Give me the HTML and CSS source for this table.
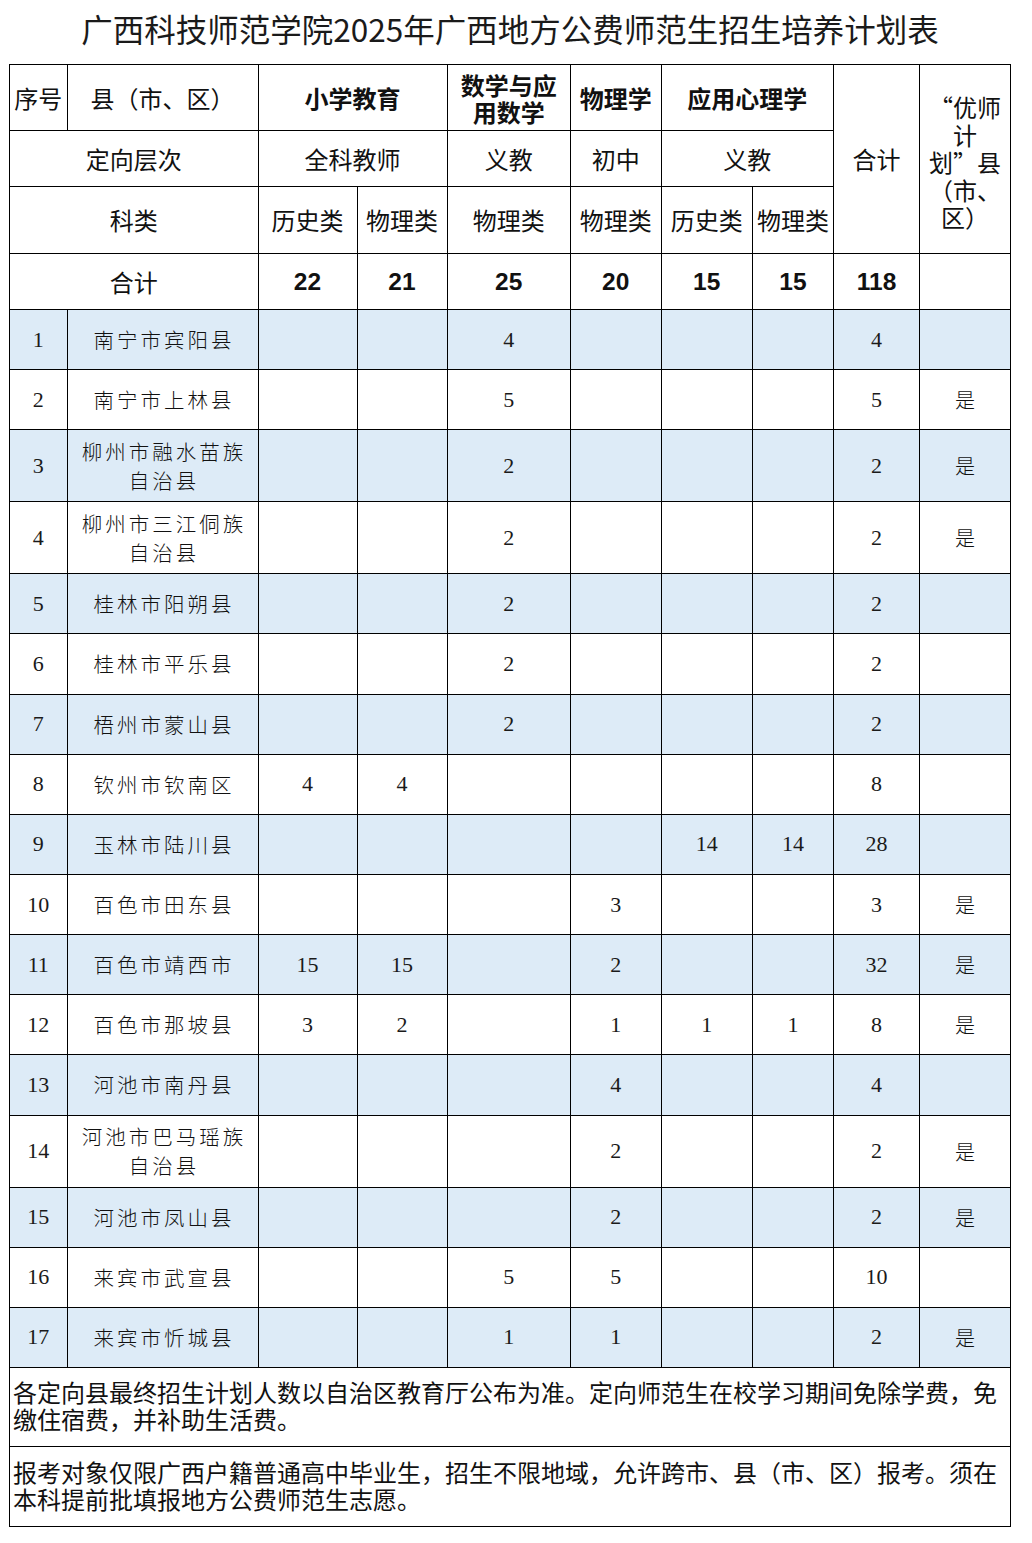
FILE: index.html
```html
<!DOCTYPE html>
<html lang="zh-CN">
<head>
<meta charset="utf-8">
<title>广西科技师范学院2025年广西地方公费师范生招生培养计划表</title>
<link rel="stylesheet" href="styles.css">
</head>
<body>
<div class="page">
  <h1 class="title">广西科技师范学院2025年广西地方公费师范生招生培养计划表</h1>
  <table class="plan">
    <colgroup>
      <col class="c1"><col class="c2"><col class="c3"><col class="c4"><col class="c5">
      <col class="c6"><col class="c7"><col class="c8"><col class="c9"><col class="c10">
    </colgroup>
    <thead>
      <tr class="h1">
        <th>序号</th>
        <th>县（市、区）</th>
        <th class="b" colspan="2">小学教育</th>
        <th class="b tight">数学与应<br>用数学</th>
        <th class="b">物理学</th>
        <th class="b" colspan="2">应用心理学</th>
        <th rowspan="3">合计</th>
        <th rowspan="3" class="youshi">“优师<br>计<br>划”县<br>（市、<br>区）</th>
      </tr>
      <tr class="h2">
        <th colspan="2">定向层次</th>
        <th colspan="2">全科教师</th>
        <th>义教</th>
        <th>初中</th>
        <th colspan="2">义教</th>
      </tr>
      <tr class="h3">
        <th colspan="2">科类</th>
        <th>历史类</th>
        <th>物理类</th>
        <th>物理类</th>
        <th>物理类</th>
        <th>历史类</th>
        <th>物理类</th>
      </tr>
      <tr class="h4">
        <th colspan="2">合计</th>
        <th class="num">22</th>
        <th class="num">21</th>
        <th class="num">25</th>
        <th class="num">20</th>
        <th class="num">15</th>
        <th class="num">15</th>
        <th class="num">118</th>
        <th></th>
      </tr>
    </thead>
    <tbody>
      <tr class="odd"><td class="n">1</td><td class="cn">南宁市宾阳县</td><td></td><td></td><td class="n">4</td><td></td><td></td><td></td><td class="n">4</td><td class="yes"></td></tr>
      <tr><td class="n">2</td><td class="cn">南宁市上林县</td><td></td><td></td><td class="n">5</td><td></td><td></td><td></td><td class="n">5</td><td class="yes">是</td></tr>
      <tr class="odd two"><td class="n">3</td><td class="cn">柳州市融水苗族<br>自治县</td><td></td><td></td><td class="n">2</td><td></td><td></td><td></td><td class="n">2</td><td class="yes">是</td></tr>
      <tr class="two"><td class="n">4</td><td class="cn">柳州市三江侗族<br>自治县</td><td></td><td></td><td class="n">2</td><td></td><td></td><td></td><td class="n">2</td><td class="yes">是</td></tr>
      <tr class="odd"><td class="n">5</td><td class="cn">桂林市阳朔县</td><td></td><td></td><td class="n">2</td><td></td><td></td><td></td><td class="n">2</td><td class="yes"></td></tr>
      <tr><td class="n">6</td><td class="cn">桂林市平乐县</td><td></td><td></td><td class="n">2</td><td></td><td></td><td></td><td class="n">2</td><td class="yes"></td></tr>
      <tr class="odd"><td class="n">7</td><td class="cn">梧州市蒙山县</td><td></td><td></td><td class="n">2</td><td></td><td></td><td></td><td class="n">2</td><td class="yes"></td></tr>
      <tr><td class="n">8</td><td class="cn">钦州市钦南区</td><td class="n">4</td><td class="n">4</td><td></td><td></td><td></td><td></td><td class="n">8</td><td class="yes"></td></tr>
      <tr class="odd"><td class="n">9</td><td class="cn">玉林市陆川县</td><td></td><td></td><td></td><td></td><td class="n">14</td><td class="n">14</td><td class="n">28</td><td class="yes"></td></tr>
      <tr><td class="n">10</td><td class="cn">百色市田东县</td><td></td><td></td><td></td><td class="n">3</td><td></td><td></td><td class="n">3</td><td class="yes">是</td></tr>
      <tr class="odd"><td class="n">11</td><td class="cn">百色市靖西市</td><td class="n">15</td><td class="n">15</td><td></td><td class="n">2</td><td></td><td></td><td class="n">32</td><td class="yes">是</td></tr>
      <tr><td class="n">12</td><td class="cn">百色市那坡县</td><td class="n">3</td><td class="n">2</td><td></td><td class="n">1</td><td class="n">1</td><td class="n">1</td><td class="n">8</td><td class="yes">是</td></tr>
      <tr class="odd"><td class="n">13</td><td class="cn">河池市南丹县</td><td></td><td></td><td></td><td class="n">4</td><td></td><td></td><td class="n">4</td><td class="yes"></td></tr>
      <tr class="two"><td class="n">14</td><td class="cn">河池市巴马瑶族<br>自治县</td><td></td><td></td><td></td><td class="n">2</td><td></td><td></td><td class="n">2</td><td class="yes">是</td></tr>
      <tr class="odd"><td class="n">15</td><td class="cn">河池市凤山县</td><td></td><td></td><td></td><td class="n">2</td><td></td><td></td><td class="n">2</td><td class="yes">是</td></tr>
      <tr><td class="n">16</td><td class="cn">来宾市武宣县</td><td></td><td></td><td class="n">5</td><td class="n">5</td><td></td><td></td><td class="n">10</td><td class="yes"></td></tr>
      <tr class="odd"><td class="n">17</td><td class="cn">来宾市忻城县</td><td></td><td></td><td class="n">1</td><td class="n">1</td><td></td><td></td><td class="n">2</td><td class="yes">是</td></tr>
    </tbody>
    <tfoot>
      <tr class="note"><td colspan="10">各定向县最终招生计划人数以自治区教育厅公布为准。定向师范生在校学习期间免除学费，免缴住宿费，并补助生活费。</td></tr>
      <tr class="note"><td colspan="10">报考对象仅限广西户籍普通高中毕业生，招生不限地域，允许跨市、县（市、区）报考。须在本科提前批填报地方公费师范生志愿。</td></tr>
    </tfoot>
  </table>
</div>
</body>
</html>
```

FILE: styles.css
```css
html, body {
  margin: 0;
  padding: 0;
  background: #ffffff;
}

.page {
  width: 1032px;
  height: 1543px;
  padding-left: 9px;
  box-sizing: border-box;
  font-family: "Noto Sans CJK SC", "Noto Sans", sans-serif;
  color: #111111;
}

.title {
  width: 1002px;
  height: 64px;
  margin: 0;
  font-size: 31.5px;
  font-weight: 400;
  line-height: 57px;
  text-align: center;
  color: #1a1a1a;
  white-space: nowrap;
}

.plan {
  width: 1002px;
  table-layout: fixed;
  border-collapse: collapse;
  border: 1px solid #000;
}

.plan th,
.plan td {
  border: 1px solid #000;
  padding: 0;
  text-align: center;
  vertical-align: middle;
}

.c1 { width: 57.5px; }
.c2 { width: 191px; }
.c3 { width: 99px; }
.c4 { width: 90px; }
.c5 { width: 123.5px; }
.c6 { width: 90.5px; }
.c7 { width: 91.5px; }
.c8 { width: 81px; }
.c9 { width: 86px; }
.c10 { width: 91px; }

.plan th {
  font-size: 24px;
  font-weight: 400;
  line-height: 26px;
  color: #111;
}

.plan th.b {
  font-weight: 700;
}

.plan th.tight {
  line-height: 27px;
}

.plan th.youshi {
  line-height: 27.5px;
  font-feature-settings: "fwid" 1;
  padding-top: 6px;
}

.plan th.num {
  font-family: "Liberation Sans", Arial, sans-serif;
  font-weight: 700;
  font-size: 24.5px;
}

.h1 { height: 66px; }
.h2 { height: 56px; }
.h3 { height: 67px; }
.h4 { height: 56px; }

.plan tbody tr { height: 60.15px; }
.plan tbody tr.two { height: 72px; }
.plan tbody tr.odd { background: #ddebf7; }

.plan td.n {
  font-family: "Liberation Serif", "DejaVu Serif", serif;
  font-size: 22px;
  color: #1a1a1a;
}

.plan td.cn {
  font-size: 20.5px;
  font-weight: 300;
  letter-spacing: 3px;
  padding-left: 3px;
  line-height: 29px;
  color: #111;
}

.plan td.yes {
  font-size: 20px;
  font-weight: 300;
  color: #111;
}

.plan tr.note td {
  text-align: left;
  font-size: 24px;
  line-height: 27px;
  padding: 0 4px 3px 3px;
  color: #111;
}

.plan tr.note:first-child { height: 79px; }
.plan tr.note:last-child { height: 80px; }
```
